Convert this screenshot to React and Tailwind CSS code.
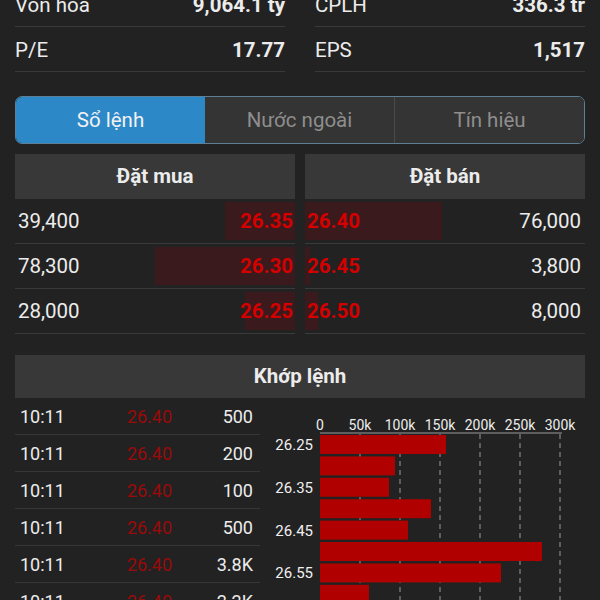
import React from 'react'

const stats = [
  [
    { label: 'Vốn hóa', value: '9,064.1 tỷ' },
    { label: 'P/E', value: '17.77' },
  ],
  [
    { label: 'CPLH', value: '336.3 tr' },
    { label: 'EPS', value: '1,517' },
  ],
]

const bids = [
  { qty: '39,400', price: '26.35', bar: 70 },
  { qty: '78,300', price: '26.30', bar: 140 },
  { qty: '28,000', price: '26.25', bar: 50 },
]

const asks = [
  { qty: '76,000', price: '26.40', bar: 137 },
  { qty: '3,800', price: '26.45', bar: 5 },
  { qty: '8,000', price: '26.50', bar: 13 },
]

const trades = [
  { time: '10:11', price: '26.40', vol: '500' },
  { time: '10:11', price: '26.40', vol: '200' },
  { time: '10:11', price: '26.40', vol: '100' },
  { time: '10:11', price: '26.40', vol: '500' },
  { time: '10:11', price: '26.40', vol: '3.8K' },
  { time: '10:11', price: '26.40', vol: '2.2K' },
]

const volBars = [126, 75, 69, 111, 88, 222, 181, 49]

function VolumeChart() {
  const ticks = ['0', '50k', '100k', '150k', '200k', '250k', '300k']
  return (
    <svg width="330" height="202" viewBox="0 0 330 202">
      {ticks.map((t, i) => (
        <text key={t} x={50 + i * 40} y="32" fill="#ededed" fontSize="14" textAnchor="middle" fontFamily="Roboto, sans-serif">
          {t}
        </text>
      ))}
      {[1, 2, 3, 4, 5, 6].map((i) => (
        <line key={i} x1={50 + i * 40} y1="36" x2={50 + i * 40} y2="202" stroke="#9a9a9a" strokeWidth="1" strokeDasharray="5 4" />
      ))}
      <line x1="50" y1="35" x2="292" y2="35" stroke="#9a9a9a" strokeWidth="1" />
      {volBars.map((w, i) => (
        <rect key={i} x="50" y={37 + i * 21.4} width={w} height="19" fill="#b00000" />
      ))}
      {['26.25', '26.35', '26.45', '26.55'].map((l, i) => (
        <text key={l} x="43" y={52 + i * 42.8} fill="#f0f0f0" fontSize="15" textAnchor="end" fontFamily="Roboto, sans-serif">
          {l}
        </text>
      ))}
    </svg>
  )
}

export default function App() {
  return (
    <div className="w-[600px] h-[600px] overflow-hidden bg-[#222222] text-[#ececec] font-['Roboto',sans-serif]">
      {/* stats */}
      <div className="grid grid-cols-2 gap-[30px] px-[15px] mt-[-18px]">
        {stats.map((col, ci) => (
          <div key={ci}>
            {col.map((s, i) => (
              <div
                key={s.label}
                className={`${i === 0 ? 'h-[45px]' : 'h-[45px]'} flex items-center justify-between border-b border-[#3a3a3a] text-[20.5px] pt-[3px]`}
              >
                <span>{s.label}</span>
                <span className="font-bold">{s.value}</span>
              </div>
            ))}
          </div>
        ))}
      </div>

      {/* tabs */}
      <div className="mx-[15px] mt-[24px] h-[48px] flex rounded-[7px] border border-[#5d7f96] overflow-hidden text-[20.5px]">
        <div className="flex-1 flex items-center justify-center bg-[#2d88c8] text-[#f2f2f2]">Sổ lệnh</div>
        <div className="flex-1 flex items-center justify-center bg-[#343434] text-[#8e8e8e] border-r border-[#4a4a4a]">Nước ngoài</div>
        <div className="flex-1 flex items-center justify-center bg-[#343434] text-[#8e8e8e]">Tín hiệu</div>
      </div>

      {/* order book */}
      <div className="grid grid-cols-2 gap-[10px] px-[15px] mt-[10px]">
        <div>
          <div className="h-[45px] flex items-center justify-center bg-[#383838] font-bold text-[20.5px]">Đặt mua</div>
          {bids.map((b) => (
            <div key={b.price} className="h-[45px] flex items-center justify-between border-b border-[#3a3a3a] relative text-[20.5px]">
              <span className="pl-[3px]">{b.qty}</span>
              <div className="absolute right-0 top-[3px] bottom-[3px] bg-[#3a1a1c]" style={{ width: b.bar }} />
              <span className="relative pr-[2px] text-[#d40000] font-bold">{b.price}</span>
            </div>
          ))}
        </div>
        <div>
          <div className="h-[45px] flex items-center justify-center bg-[#383838] font-bold text-[20.5px]">Đặt bán</div>
          {asks.map((a) => (
            <div key={a.price} className="h-[45px] flex items-center justify-between border-b border-[#3a3a3a] relative text-[20.5px]">
              <div className="absolute left-0 top-[3px] bottom-[3px] bg-[#3a1a1c]" style={{ width: a.bar }} />
              <span className="relative pl-[2px] text-[#d40000] font-bold">{a.price}</span>
              <span className="pr-[4px]">{a.qty}</span>
            </div>
          ))}
        </div>
      </div>

      {/* matched orders */}
      <div className="mx-[15px] mt-[21px] h-[43px] flex items-center justify-center bg-[#383838] font-bold text-[20.5px]">Khớp lệnh</div>
      <div className="flex">
        <div className="w-[245px] ml-[15px] shrink-0">
          {trades.map((t, i) => (
            <div key={i} className="h-[37px] grid grid-cols-[1fr_1fr_1fr] items-center border-b border-[#363636] text-[18px] pt-[1px]">
              <span className="pl-[5px]">{t.time}</span>
              <span className="text-center text-[#9a0a0a] pl-[24px]">{t.price}</span>
              <span className="text-right pr-[7px]">{t.vol}</span>
            </div>
          ))}
        </div>
        <div className="ml-[10px]">
          <VolumeChart />
        </div>
      </div>
    </div>
  )
}
